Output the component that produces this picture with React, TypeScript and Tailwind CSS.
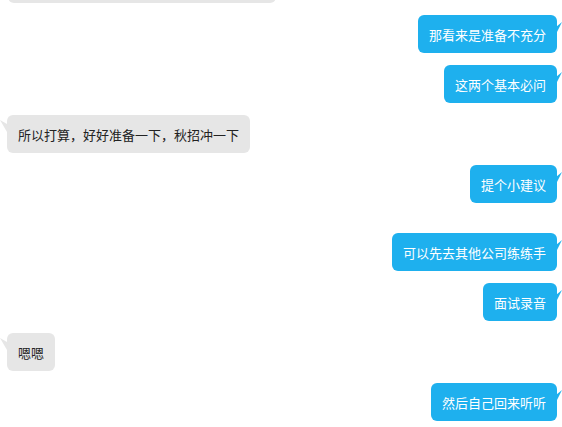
import React from 'react';

type Msg = { text: string; mine: boolean; gap?: string };

const MESSAGES: Msg[] = [
  { text: '那看来是准备不充分', mine: true, gap: 'mt-3' },
  { text: '这两个基本必问', mine: true, gap: 'mt-3' },
  { text: '所以打算，好好准备一下，秋招冲一下', mine: false, gap: 'mt-3' },
  { text: '提个小建议', mine: true, gap: 'mt-3' },
  { text: '可以先去其他公司练练手', mine: true, gap: 'mt-[30px]' },
  { text: '面试录音', mine: true, gap: 'mt-3' },
  { text: '嗯嗯', mine: false, gap: 'mt-3' },
  { text: '然后自己回来听听', mine: true, gap: 'mt-3' },
];

const Bubble = ({ text, mine }: { text: string; mine: boolean }) => (
  <div className={`relative h-[38px] px-[11px] flex items-center rounded-[6px] text-[13px] leading-none whitespace-nowrap ${mine ? 'bg-[#1eb0ee] text-white' : 'bg-[#e6e6e6] text-[#222]'}`}>
    {mine ? (
      <svg className="absolute -right-[5px] top-[6px]" width="6" height="14" viewBox="0 0 6 14">
        <polygon points="0,6 0,13 6,1" fill="#1eb0ee" />
      </svg>
    ) : (
      <svg className="absolute -left-[7px] top-[4px]" width="7" height="14" viewBox="0 0 7 14">
        <polygon points="7,5 7,13 0,1" fill="#e6e6e6" />
      </svg>
    )}
    {text}
  </div>
);

export default function App() {
  return (
    <div className="w-[562px] h-[427px] bg-white overflow-hidden" style={{ fontFamily: '"Noto Sans CJK SC", "Microsoft YaHei", sans-serif' }}>
      <div className="flex flex-col">
        {/* previous message, scrolled mostly out of view */}
        <div className="flex pl-[8px] -mt-[35px]">
          <div className="h-[38px] w-[268px] rounded-[6px] bg-[#e6e6e6]" />
        </div>
        {MESSAGES.map((m, i) => (
          <div key={i} className={`flex ${m.gap} ${m.mine ? 'justify-end pr-[5px]' : 'justify-start pl-[7px]'}`}>
            <Bubble text={m.text} mine={m.mine} />
          </div>
        ))}
      </div>
    </div>
  );
}
